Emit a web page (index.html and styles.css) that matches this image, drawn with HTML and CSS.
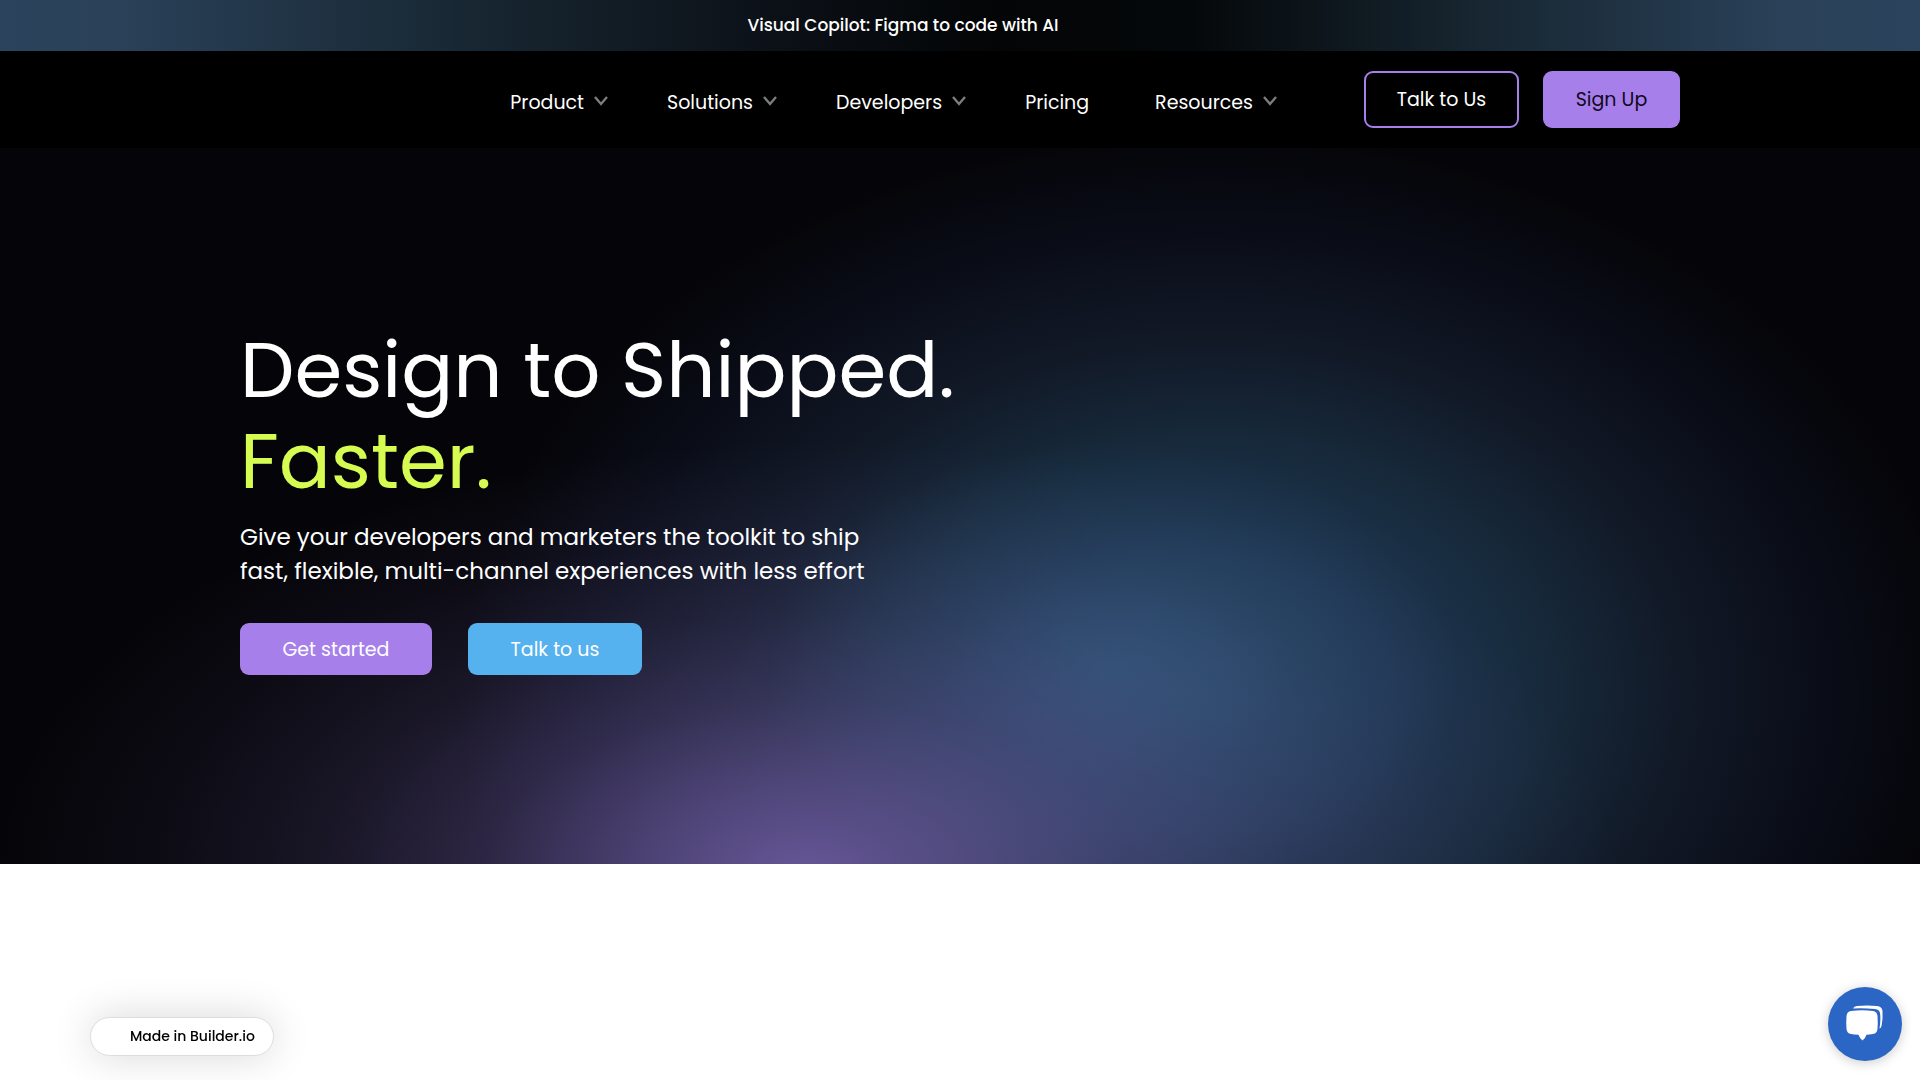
FILE: index.html
```
<!DOCTYPE html>
<html lang="en">

<head>
  <meta charset="UTF-8">
  <meta name="viewport" content="width=device-width, initial-scale=1.0">
  <title>Design to Shipped. Faster.</title>
  <link rel="stylesheet" href="styles.css">
</head>

<body>
  <a class="banner" href="#">Visual Copilot: Figma to code with AI</a>

  <header class="header">
    <div class="header-inner">
      <nav class="nav">
        <a href="#">Product <svg class="chevron" viewBox="0 0 14 10"><path d="M1 1l6 7 6-7"/></svg></a>
        <a href="#">Solutions <svg class="chevron" viewBox="0 0 14 10"><path d="M1 1l6 7 6-7"/></svg></a>
        <a href="#">Developers <svg class="chevron" viewBox="0 0 14 10"><path d="M1 1l6 7 6-7"/></svg></a>
        <a class="no-menu" href="#">Pricing</a>
        <a href="#">Resources <svg class="chevron" viewBox="0 0 14 10"><path d="M1 1l6 7 6-7"/></svg></a>
      </nav>
      <div class="header-btns">
        <a class="btn btn-outline" href="#">Talk to Us</a>
        <a class="btn btn-signup" href="#">Sign Up</a>
      </div>
    </div>
  </header>

  <main class="hero">
    <div class="hero-inner">
      <h1>Design to Shipped. <span>Faster.</span></h1>
      <p>Give your developers and marketers the toolkit to ship<br>fast, flexible, multi-channel experiences with less effort</p>
      <div class="hero-btns">
        <a class="btn btn-start" href="#">Get started</a>
        <a class="btn btn-talk" href="#">Talk to us</a>
      </div>
    </div>
  </main>

  <a class="made-in" href="#">Made in Builder.io</a>

  <button class="chat" type="button" aria-label="Open chat">
    <svg viewBox="0 0 40 38">
      <path d="M8 3.500Q9 1 12 1Q22 0 32 1Q37 1.500 37.500 6Q38 14 36.500 21Q36 23 34.500 23.500Q36 14 35 8Q34.500 4.500 30 4Q19 3 8 3.500z"/>
      <path d="M6 6Q17 4.500 28 6Q32 6.500 32.500 11Q33 18 32.500 24Q32 28.500 28 29Q24 29.500 21.500 29.700Q20 34 17.500 35.500Q15 34 13.500 29.700Q9 29.500 6 29Q2 28.500 1.500 24Q1 18 1.500 11Q2 6.500 6 6z"/>
    </svg>
  </button>
</body>

</html>
```

FILE: styles.css
```
*{margin: 0; padding: 0; box-sizing: border-box;}
a{text-decoration: none; color: inherit;}
body{
  font-family: Poppins, Inter, sans-serif;
  color: #fff;
  background-color: #fff;
}

/*banner*/
.banner{
  display: flex;
  align-items: center;
  justify-content: center;
  height: 51px;
  padding: 0 114px 2px 0;
  font-size: 17px;
  font-weight: 500;
  background: linear-gradient(90deg, #2b435c 0%, #2a4159 6%, #172631 25%, #0c1118 40%, #030506 52%, #05080a 62%, #172631 77%, #2a4159 93%, #2b435c 100%);
}

/*header*/
.header{
  background-color: #000;
}
.header-inner{
  display: flex;
  align-items: center;
  justify-content: flex-end;
  gap: 87px;
  max-width: 1440px;
  height: 97px;
  margin: 0 auto;
}
.nav{
  display: flex;
  gap: 59px;
  padding-top: 5px;
  font-size: 19px;
}
.nav a{
  display: flex;
  align-items: center;
  gap: 10px;
}
.nav .no-menu{
  padding-right: 7px;
}
.chevron{
  width: 14px;
  height: 10px;
  margin-bottom: 2px;
  fill: none;
  stroke: #7d7d7d;
  stroke-width: 2.4;
}
.header-btns{
  display: flex;
  gap: 24px;
}

/*buttons*/
.btn{
  display: flex;
  align-items: center;
  justify-content: center;
  height: 52px;
  border-radius: 9px;
  font-size: 19px;
}
.btn-outline{
  width: 155px;
  height: 57px;
  border: 2px solid #a67fea;
}
.btn-signup{
  width: 137px;
  height: 57px;
  color: #10081c;
  background-color: #a67fea;
}
.btn-start{
  width: 192px;
  background-color: #a67fea;
}
.btn-talk{
  width: 174px;
  background-color: #56b1ef;
}

/*hero*/
.hero{
  padding: 177px 24px 189px;
  background:
    radial-gradient(42% 60% at 42% 101%, rgba(104, 88, 154, .97) 0%, rgba(104, 88, 154, .7) 20%, rgba(104, 88, 154, .4) 40%, rgba(104, 88, 154, .2) 60%, rgba(104, 88, 154, .08) 80%, rgba(104, 88, 154, 0) 100%),
    radial-gradient(18% 32% at 58% 73%, rgba(48, 94, 130, .6) 0%, rgba(48, 94, 130, .22) 50%, rgba(48, 94, 130, 0) 100%),
    radial-gradient(39% 78% at 63% 76%, #23405c 0%, #1e3550 25%, #172a3c 44%, #111826 64%, #0a0d18 82%, #050509 100%);
}
.hero-inner{
  max-width: 1440px;
  margin: 0 auto;
}
.hero h1{
  font-size: 77px;
  font-weight: 400;
  line-height: 91px;
}
.hero h1 span{
  display: block;
  color: #d7fc51;
}
.hero p{
  margin-top: 13px;
  font-size: 23px;
  line-height: 34px;
}
.hero-btns{
  display: flex;
  gap: 36px;
  margin-top: 35px;
}

/*floating badge and chat*/
.made-in{
  position: fixed;
  left: 90px;
  bottom: 24px;
  width: 184px;
  padding-left: 39px;
  border: 1px solid #ddd;
  border-radius: 20px;
  font-size: 14px;
  font-weight: 500;
  line-height: 37px;
  color: #000;
  background-color: #fff;
  box-shadow: 0 0 40px rgba(0, 0, 0, .16);
}
.chat{
  position: fixed;
  right: 18px;
  bottom: 19px;
  display: flex;
  align-items: center;
  justify-content: center;
  width: 74px;
  height: 74px;
  border: 0;
  border-radius: 50%;
  background-color: #2b66c5;
  box-shadow: 0 2px 12px rgba(0, 0, 0, .2);
}
.chat svg{
  width: 40px;
  height: 38px;
  fill: #fff;
}
```
